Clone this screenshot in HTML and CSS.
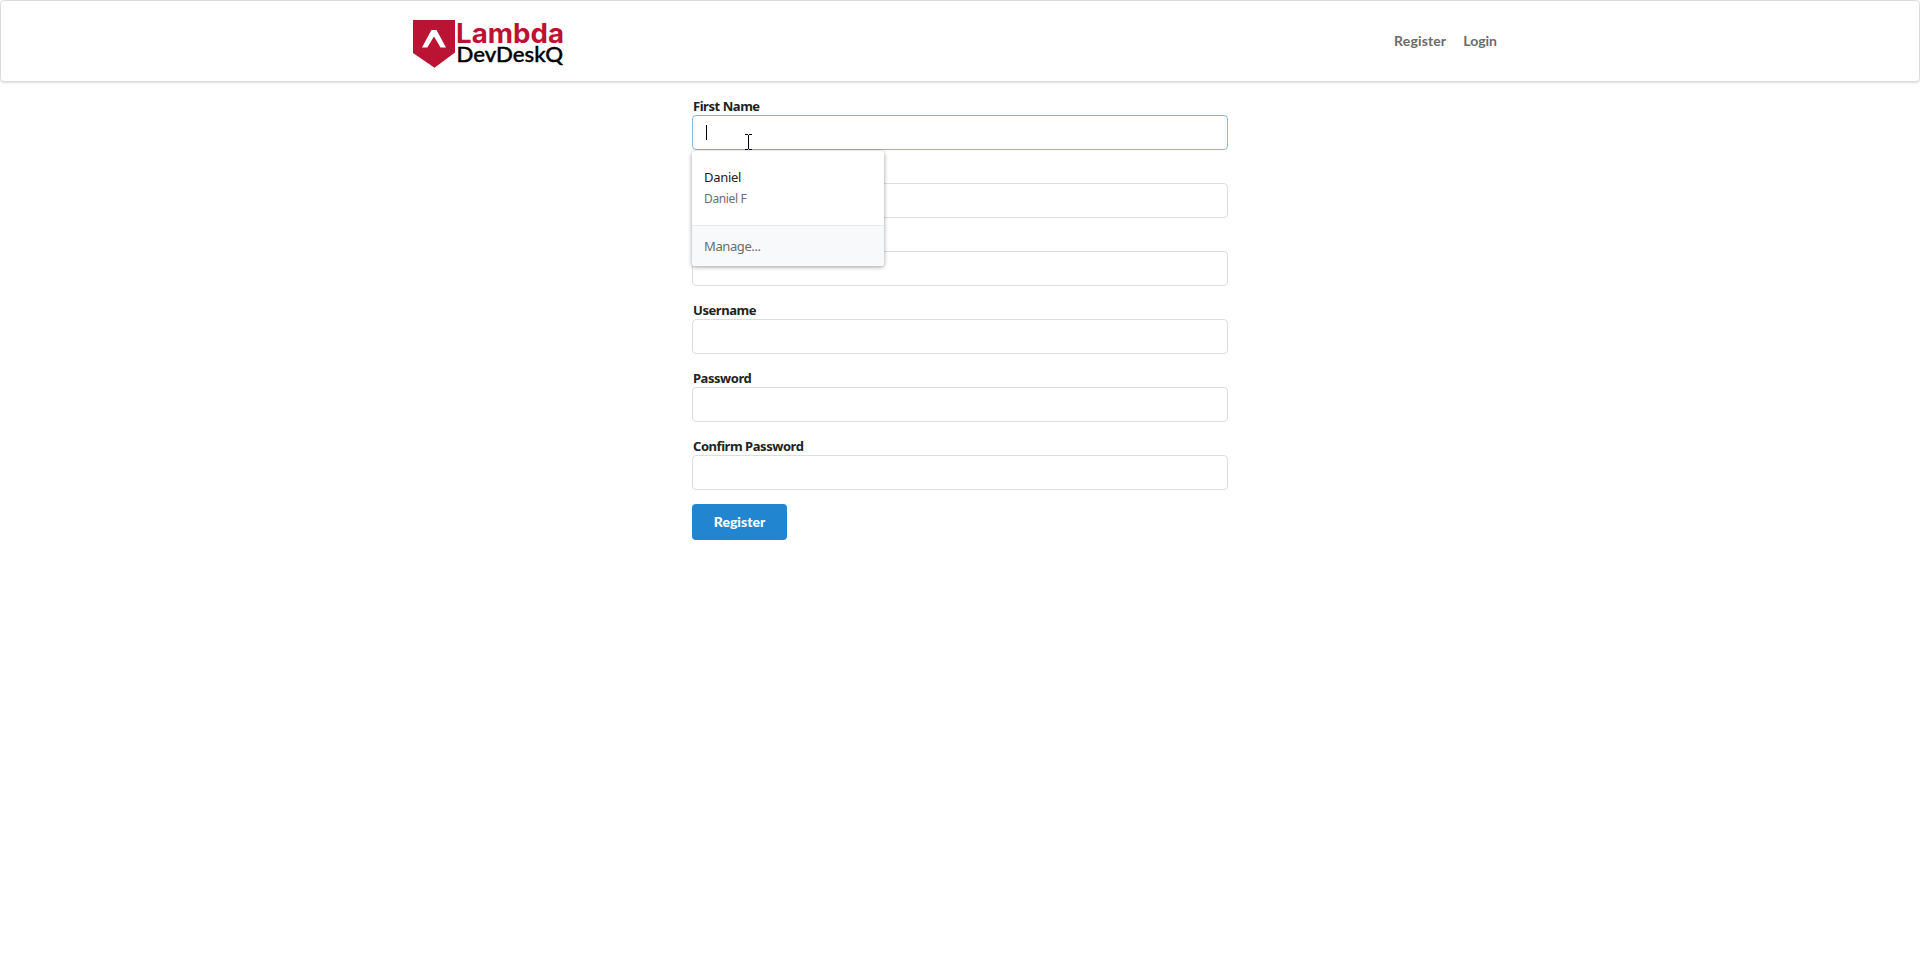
FILE: index.html
```
<!DOCTYPE html>
<html lang="en">
<head>
<meta charset="utf-8">
<title>Lambda DevDeskQ</title>
<link rel="stylesheet" href="styles.css">
</head>
<body>
<header class="menu">
  <div class="menu-inner">
    <svg class="logo" width="152" height="50" viewBox="0 0 152 50">
      <path d="M0 1 H42 V33.5 L21.5 48.8 L0 34 Z" fill="#bb1333"/>
      <path d="M9 28.5 L18.4 11 H23.5 L33 28.5 H27.5 L21 17.5 L14.3 28.5 Z" fill="#fff"/>
      <text class="logo-top" x="43" y="23.7" textLength="108" lengthAdjust="spacingAndGlyphs">Lambda</text>
      <text class="logo-bottom" x="43.6" y="42.7" textLength="106.5" lengthAdjust="spacingAndGlyphs">DevDeskQ</text>
    </svg>
    <nav class="links">
      <a class="link-register">Register</a>
      <a>Login</a>
    </nav>
  </div>
</header>
<form class="form">
  <div class="field">
    <label class="label">First Name</label>
    <div class="input focused">
      <span class="caret"></span>
      <svg class="pointer" width="7" height="16" viewBox="0 0 7 16" shape-rendering="crispEdges">
        <path d="M0 0h3v1H0zM4 0h3v1H4zM3 1h1v14H3zM0 15h3v1H0zM4 15h3v1H4z" fill="#000"/>
      </svg>
    </div>
    <div class="suggestions">
      <div class="suggestion">
        <div class="name">Daniel</div>
        <div class="detail">Daniel F</div>
      </div>
      <div class="manage">Manage...</div>
    </div>
  </div>
  <div class="field"><label class="label"></label><div class="input"></div></div>
  <div class="field"><label class="label"></label><div class="input"></div></div>
  <div class="field"><label class="label">Username</label><div class="input"></div></div>
  <div class="field"><label class="label">Password</label><div class="input"></div></div>
  <div class="field"><label class="label">Confirm Password</label><div class="input"></div></div>
  <button class="button" type="button">Register</button>
</form>
</body>
</html>
```
FILE: styles.css
```
* { box-sizing: border-box; }
body { margin: 0; background: #fff; font-family: "Noto Sans", sans-serif; color: #212121; }
.menu { height: 82px; border: 1px solid #dadbdc; border-radius: 4px; box-shadow: 0 1px 2px rgba(34,36,38,.15); }
.menu-inner { width: 1094px; margin: 0 auto; display: flex; justify-content: space-between; padding-top: 18px; }
.logo { display: block; overflow: visible; }
.logo-top { font: 700 27px Inter, sans-serif; fill: #bb1333; }
.logo-bottom { font: 500 21px Lato, sans-serif; fill: #000; stroke: #000; stroke-width: .4px; }
.links { display: flex; gap: 17px; padding: 12px 10px 0 0; font: 700 14px/20px Lato, sans-serif; color: #6b6b6b; }
.link-register { letter-spacing: .15px; }
.form { width: 536px; margin: 15px auto 0; }
.field { position: relative; height: 68px; }
.label { display: block; height: 18px; padding-left: 1px; font-size: 13px; line-height: 18px; font-weight: 700; letter-spacing: -.45px; }
.input { height: 35px; border: 1px solid #dcddde; border-radius: 4px; position: relative; }
.focused { border-color: #85b7d9; }
.caret { position: absolute; left: 13px; top: 9px; width: 1px; height: 15px; background: #000; }
.pointer { position: absolute; left: 52px; top: 18px; }
.suggestions { position: absolute; z-index: 2; left: 0; top: 54px; width: 192px; height: 115px; border-radius: 3px; background: #fff; box-shadow: 0 1px 4px rgba(0,0,0,.4); overflow: hidden; }
.suggestion { height: 75px; padding: 16px 12px 0; border-bottom: 1px solid #e8eaed; }
.name { font-size: 13px; line-height: 20px; letter-spacing: -.3px; color: #202124; }
.detail { font-size: 12px; line-height: 23px; letter-spacing: -.35px; color: #6b6d70; }
.manage { height: 40px; padding: 0 12px; background: #f8f9fa; font-size: 13px; line-height: 41px; letter-spacing: -.4px; color: #6b6d70; }
.button { display: block; width: 95px; height: 36px; margin-top: -1px; padding: 0; border: 0; border-radius: 4px; background: #2185d0; color: #fff; font: 900 14px/36px Lato, sans-serif; }
```
